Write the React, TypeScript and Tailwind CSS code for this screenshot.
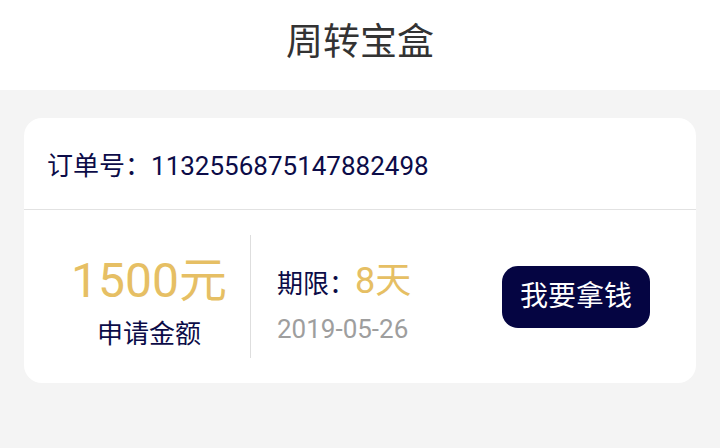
import React from "react";

export default function App() {
  return (
    <div
      className="w-[720px] h-[448px] bg-[#f4f4f4] overflow-hidden"
      style={{ fontFamily: 'Roboto, "Noto Sans CJK SC", sans-serif' }}
    >
      <div className="h-[90px] bg-white flex justify-center pt-[24px]">
        <h1 className="text-[37px] leading-[37px] text-[#333333] font-normal">周转宝盒</h1>
      </div>
      <div className="mx-[24px] mt-[28px] bg-white rounded-[18px] h-[265px] flex flex-col">
        <div className="h-[92px] flex items-center pl-[23px] pt-[4px] border-b border-[#e2e2e2] text-[26px] leading-[26px] text-[#0c0c48]">
          <span>订单号：</span>
          <span>1132556875147882498</span>
        </div>
        <div className="flex-1 flex items-center">
          <div className="w-[226px] pl-[24px] flex flex-col items-center">
            <div className="text-[48px] leading-[48px] text-[#e6bf64] mt-[10px]">1500元</div>
            <div className="text-[26px] leading-[26px] text-[#0c0c48] mt-[16px]">申请金额</div>
          </div>
          <div className="w-px h-[123px] bg-[#dedede]" />
          <div className="flex-1 flex items-center justify-between pl-[26px] pr-[46px]">
            <div className="flex flex-col">
              <div className="flex items-baseline text-[#0c0c48] mt-[12px]">
                <span className="text-[26px] leading-[36px]">期限：</span>
                <span className="text-[36px] leading-[36px] text-[#e6bf64]">8天</span>
              </div>
              <div className="text-[26px] leading-[26px] text-[#9e9e9e] mt-[14px]">2019-05-26</div>
            </div>
            <button className="w-[148px] h-[62px] rounded-[16px] bg-[#050542] text-white text-[28px] leading-[28px] flex items-center justify-center">
              我要拿钱
            </button>
          </div>
        </div>
      </div>
    </div>
  );
}
